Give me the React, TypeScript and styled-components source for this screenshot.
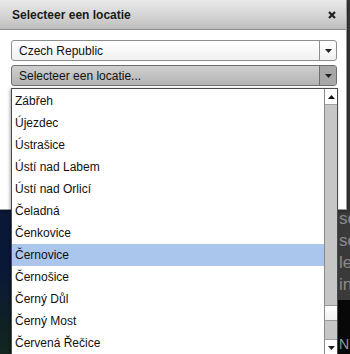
import styled, { createGlobalStyle } from "styled-components";

const GlobalStyle = createGlobalStyle`
  html, body {
    margin: 0;
    padding: 0;
    background: #000;
  }
  body {
    font-family: "Liberation Sans", Arial, sans-serif;
    overflow: hidden;
  }
`;

const Page = styled.div`
  position: relative;
  width: 350px;
  height: 354px;
  overflow: hidden;
`;

const Backdrop = styled.div`
  display: grid;
  grid-template-columns: 338px 1fr;
  height: 100%;
`;

const Photo = styled.div`
  background: linear-gradient(180deg, #0c1a3c 0%, #0a1838 75%, #13261e 100%);
`;

const Article = styled.div`
  display: flex;
  flex-direction: column;
  background: linear-gradient(180deg, #3a3a3a 0 300px, #080808 300px);
  padding: 208px 0 0 1px;
  font-size: 17px;
  line-height: 22px;
  color: #8a8a8a;
  white-space: nowrap;
`;

const ArticleFoot = styled.div`
  margin-top: auto;
  color: #999;
  font-size: 14px;
  line-height: 16px;
  padding-bottom: 2px;
`;

const Dialog = styled.div`
  position: absolute;
  top: 0;
  left: 0;
  width: 346px;
  height: 209px;
  background: #fff;
  border-right: 1px solid #9a9a9a;
  border-bottom: 1px solid #9a9a9a;
  box-shadow: 1px 1px 3px rgba(0, 0, 0, 0.4);
  display: flex;
  flex-direction: column;
`;

const Header = styled.div`
  display: flex;
  align-items: center;
  justify-content: space-between;
  height: 29px;
  padding: 0 12px 0 12px;
  background: linear-gradient(180deg, #e9e9e9 0%, #d4d4d4 55%, #bdbdbd 100%);
  border-bottom: 1px solid #8e8e8e;
`;

const Title = styled.div`
  font-size: 12px;
  font-weight: bold;
  color: #1a1a1a;
`;

const Close = styled.svg`
  width: 8px;
  height: 8px;
  margin-right: -2px;
`;

const Body = styled.div`
  position: relative;
  display: flex;
  flex-direction: column;
  gap: 4px;
  padding: 10px 9px 0 11px;
`;

const SelectBox = styled.div<{ $active?: boolean }>`
  display: flex;
  height: 19px;
  border: 1px solid ${({ $active }) => ($active ? "#6e6e6e" : "#8e8e8e")};
  border-radius: 3px;
  background: ${({ $active }) =>
    $active
      ? "linear-gradient(180deg, #cfcfcf 0%, #b4b4b4 100%)"
      : "linear-gradient(180deg, #ffffff 0%, #f1f1f1 100%)"};
  font-size: 12px;
  color: #111;
`;

const SelectLabel = styled.div`
  flex: 1;
  display: flex;
  align-items: center;
  padding-left: 7px;
`;

const SelectArrow = styled.div<{ $active?: boolean }>`
  width: 16px;
  display: flex;
  align-items: center;
  justify-content: center;
  border-left: 1px solid ${({ $active }) => ($active ? "#6e6e6e" : "#8e8e8e")};
  background: ${({ $active }) => ($active ? "#a8a8a8" : "transparent")};
  border-radius: 0 2px 2px 0;
`;

const Triangle = styled.svg`
  width: 7px;
  height: 4px;
`;

const Dropdown = styled.div`
  position: absolute;
  top: 58px;
  left: 11px;
  width: 325px;
  height: 266px;
  display: flex;
  background: #fff;
  border: 1px solid #4a4a4a;
  box-shadow: -1px 1px 3px rgba(0, 0, 0, 0.35);
  z-index: 2;
`;

const List = styled.div`
  flex: 1;
  padding-top: 1px;
  overflow: hidden;
`;

const Item = styled.div<{ $selected?: boolean }>`
  height: 22px;
  line-height: 22px;
  padding-left: 3px;
  font-size: 12px;
  color: #111;
  background: ${({ $selected }) => ($selected ? "#abc6ec" : "transparent")};
`;

const Scrollbar = styled.div`
  width: 12px;
  display: flex;
  flex-direction: column;
  border-left: 1px solid #8a8a8a;
  background: #c6c6c6;
`;

const ScrollButton = styled.div<{ $bottom?: boolean }>`
  height: 15px;
  display: flex;
  align-items: center;
  justify-content: center;
  background: #fff;
  border-bottom: ${({ $bottom }) => ($bottom ? "none" : "1px solid #a0a0a0")};
  border-top: ${({ $bottom }) => ($bottom ? "1px solid #a0a0a0" : "none")};
`;

const Track = styled.div`
  flex: 1;
  display: flex;
  flex-direction: column;
`;

const Thumb = styled.div`
  height: 14px;
  margin-top: 200px;
  background: linear-gradient(180deg, #ffffff, #f2f2f2);
  border-top: 1px solid #9a9a9a;
  border-bottom: 1px solid #9a9a9a;
`;

const places = [
  "Zábřeh",
  "Újezdec",
  "Ústrašice",
  "Ústí nad Labem",
  "Ústí nad Orlicí",
  "Čeladná",
  "Čenkovice",
  "Černovice",
  "Černošice",
  "Černý Důl",
  "Černý Most",
  "Červená Řečice",
];

const Down = () => (
  <Triangle viewBox="0 0 7 4">
    <path d="M0 0h7L3.5 4z" fill="#222" />
  </Triangle>
);

const Up = () => (
  <Triangle viewBox="0 0 7 4">
    <path d="M0 4h7L3.5 0z" fill="#111" />
  </Triangle>
);

export default function App() {
  return (
    <Page>
      <GlobalStyle />
      <Backdrop>
        <Photo />
        <Article>
          <div>so</div>
          <div>so</div>
          <div>le</div>
          <div>in</div>
          <ArticleFoot>N</ArticleFoot>
        </Article>
      </Backdrop>

      <Dialog>
        <Header>
          <Title>Selecteer een locatie</Title>
          <Close viewBox="0 0 8 8">
            <path d="M1 1l6 6M7 1L1 7" stroke="#222" strokeWidth="2.2" />
          </Close>
        </Header>

        <Body>
          <SelectBox>
            <SelectLabel>Czech Republic</SelectLabel>
            <SelectArrow>
              <Down />
            </SelectArrow>
          </SelectBox>
          <SelectBox $active>
            <SelectLabel>Selecteer een locatie...</SelectLabel>
            <SelectArrow $active>
              <Down />
            </SelectArrow>
          </SelectBox>

          <Dropdown>
            <List>
              {places.map((p) => (
                <Item key={p} $selected={p === "Černovice"}>
                  {p}
                </Item>
              ))}
            </List>
            <Scrollbar>
              <ScrollButton>
                <Up />
              </ScrollButton>
              <Track>
                <Thumb />
              </Track>
              <ScrollButton $bottom>
                <Down />
              </ScrollButton>
            </Scrollbar>
          </Dropdown>
        </Body>
      </Dialog>
    </Page>
  );
}
